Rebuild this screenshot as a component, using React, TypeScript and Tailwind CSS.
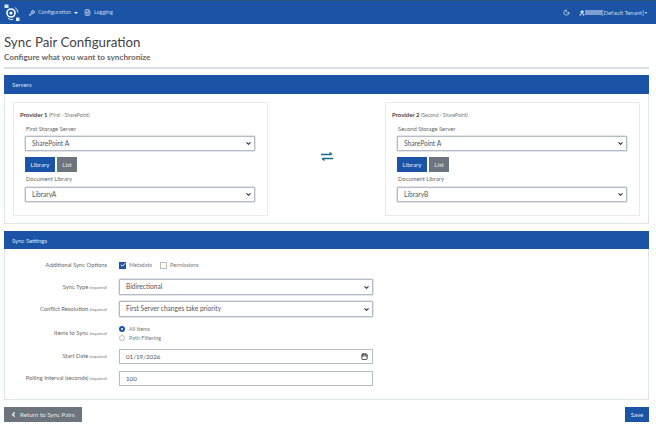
import React from 'react';
import { ChevronLeft, ChevronDown, Moon, User, FileText, Wrench, Calendar, Check } from 'lucide-react';

const Req = () => <span className="text-[4.5px] italic text-[#777]"> (required)</span>;

const FakeSelect = ({ value, h = 'h-[15px]' }: { value: string; h?: string }) => (
  <div className={`flex items-center justify-between border border-[#b4bcc6] rounded-[1px] shadow-[0_0_0_0.5px_#c5ccd4] bg-white pl-[6px] pr-[2px] ${h}`}>
    <span className="text-[6.6px] text-[#555]">{value}</span>
    <ChevronDown size={7} strokeWidth={3.5} className="text-[#333]" />
  </div>
);

const Provider = ({ num, sub, label, lib }: { num: string; sub: string; label: string; lib: string }) => (
  <div className="w-[255px] h-[114px] border border-[#e8ebef] pl-[11px] pr-[12px] pt-[7px]">
    <div className="-ml-[5px] text-[6px] leading-[10px] font-bold text-[#444] whitespace-nowrap">
      Provider {num} <span className="text-[5px] font-normal text-[#777]">({sub})</span>
    </div>
    <div className="mt-[4px] text-[5.8px] leading-[10px] text-[#666] pl-[1px]">{label}</div>
    <div className="mt-[2px]"><FakeSelect value="SharePoint A" /></div>
    <div className="mt-[6px] flex gap-[2px]">
      <div className="w-[30px] h-[15px] bg-[#1b53a6] text-[#e6ecf6] text-[6.2px] flex items-center justify-center">Library</div>
      <div className="w-[20px] h-[15px] bg-[#6c757d] text-[#e6e8ea] text-[6.2px] flex items-center justify-center">List</div>
    </div>
    <div className="mt-[2px] text-[5.8px] leading-[10px] text-[#666] pl-[1px]">Document Library</div>
    <div className="mt-[3px]"><FakeSelect value={lib} /></div>
  </div>
);

const Row = ({ label, children, h }: { label: React.ReactNode; children: React.ReactNode; h: string }) => (
  <div className={`flex items-center ${h}`}>
    <div className="w-[102px] text-right text-[5.8px] text-[#666] whitespace-nowrap">{label}</div>
    <div className="ml-[12px] w-[254px]">{children}</div>
  </div>
);

export default function App() {
  return (
    <div className="w-[656px] h-[431px] bg-white overflow-hidden font-['Lato',sans-serif] text-[#444]">
      <nav className="h-[24px] bg-[#1b53a6] border-t border-[#2f4f80] flex items-center pl-[4px] pr-[9px] text-[#c9d8ee]">
        <svg width="16" height="18" viewBox="0 0 16 18" className="shrink-0">
          <circle cx="7" cy="9" r="4" fill="none" stroke="#fff" strokeWidth="1.6" />
          <circle cx="7" cy="9" r="1.6" fill="#fff" />
          <rect x="0.5" y="0.5" width="4" height="3.5" fill="#dfe8f5" />
          <rect x="12" y="13.5" width="3.5" height="3.5" fill="#dfe8f5" />
          <path d="M4 14.5a7 7 0 0 0 5 1M11 3.5a7 7 0 0 1 3 5" fill="none" stroke="#dfe8f5" strokeWidth="1" />
        </svg>
        <Wrench size={6} strokeWidth={3} className="ml-[9px] text-white" />
        <span className="ml-[3px] text-[5.5px]">Configuration</span>
        <span className="ml-[3px] w-0 h-0 border-x-[2px] border-x-transparent border-t-[2px] border-t-white" />
        <FileText size={7} strokeWidth={2} className="ml-[6px] text-white" />
        <span className="ml-[3px] text-[5.5px]">Logging</span>
        <Moon size={7} strokeWidth={2.5} className="ml-auto text-[#dbe5f3]" />
        <User size={6} strokeWidth={4} className="ml-[9px] text-white" />
        <span className="w-[17px] h-[5px] bg-[#7f9fd0]" />
        <span className="text-[6px]">[Default Tenant]</span>
        <span className="ml-[1px] w-0 h-0 border-x-[1.5px] border-x-transparent border-t-[2px] border-t-white" />
      </nav>

      <main className="pl-[4px] pr-[7px]">
        <h1 className="mt-[10px] text-[13.3px] leading-[16px] font-normal text-[#444]">Sync Pair Configuration</h1>
        <h2 className="mt-[2px] text-[8.2px] leading-[11px] font-bold text-[#666]">Configure what you want to synchronize</h2>
        <hr className="mt-[4px] border-0 h-[2px] bg-[#dcdfe2]" />

        <section className="mt-[6px] border border-t-0 border-[#dfe6ee]">
          <div className="h-[19px] -mx-px bg-[#1b53a6] text-[#dfe8f5] text-[6px] flex items-center pl-[8px]">Servers</div>
          <div className="h-[129px] pl-[8px] pr-[8px] pt-[8px] flex items-start justify-between">
            <Provider num="1" sub="First - SharePoint" label="First Storage Server" lib="LibraryA" />
            <svg width="12" height="9" viewBox="0 0 12 9" className="mt-[50px] shrink-0">
              <path d="M0 2.5h10.5M8.5 0.5l2.5 2M12 6.5H1.5M3.5 8.5l-2.5-2" fill="none" stroke="#186d8c" strokeWidth="1.3" />
            </svg>
            <Provider num="2" sub="Second - SharePoint" label="Second Storage Server" lib="LibraryB" />
          </div>
        </section>

        <section className="mt-[7px] border border-t-0 border-[#dfe6ee]">
          <div className="h-[18px] -mx-px bg-[#1b53a6] text-[#dfe8f5] text-[6px] flex items-center pl-[8px]">Sync Settings</div>
          <div className="h-[150px] pt-[7px] flex flex-col">
            <Row label="Additional Sync Options" h="h-[18px]">
              <div className="flex items-center text-[5.5px] text-[#777]">
                <span className="w-[7px] h-[7px] bg-[#1b53a6] flex items-center justify-center"><Check size={6} strokeWidth={4} className="text-white" /></span>
                <span className="ml-[3px]">Metadata</span>
                <span className="ml-[8px] w-[7px] h-[7px] border border-[#bbb]" />
                <span className="ml-[3px]">Permissions</span>
              </div>
            </Row>
            <div className="mt-[5px]" />
            <Row label={<>Sync Type<Req /></>} h="h-[16px]"><FakeSelect value="Bidirectional" h="h-[16px]" /></Row>
            <div className="mt-[6px]" />
            <Row label={<>Conflict Resolution<Req /></>} h="h-[16px]"><FakeSelect value="First Server changes take priority" h="h-[16px]" /></Row>
            <div className="mt-[5px]" />
            <Row label={<>Items to Sync<Req /></>} h="h-[22px]">
              <div className="flex flex-col gap-[1px] text-[5.5px] text-[#777]">
                <div className="flex items-center leading-[8px]">
                  <span className="w-[6px] h-[6px] rounded-full border-2 border-[#1b53a6]" />
                  <span className="ml-[4px]">All Items</span>
                </div>
                <div className="flex items-center leading-[8px]">
                  <span className="w-[6px] h-[6px] rounded-full border border-[#bbb]" />
                  <span className="ml-[4px]">Path Filtering</span>
                </div>
              </div>
            </Row>
            <div className="mt-[5px]" />
            <Row label={<>Start Date<Req /></>} h="h-[15px]">
              <div className="h-[15px] flex items-center justify-between border border-[#b4bcc6] pl-[6px] pr-[4px] text-[6.2px] text-[#555]">
                01/19/2026
                <Calendar size={7} strokeWidth={3} className="text-[#333]" />
              </div>
            </Row>
            <div className="mt-[7px]" />
            <Row label={<>Polling Interval (seconds)<Req /></>} h="h-[15px]">
              <div className="h-[15px] flex items-center border border-[#b4bcc6] pl-[6px] text-[6.2px] text-[#555]">100</div>
            </Row>
          </div>
        </section>

        <div className="mt-[7px] flex justify-between">
          <div className="w-[78px] h-[15px] bg-[#6c757d] text-[#e6e8ea] text-[6.2px] flex items-center pl-[6px]">
            <ChevronLeft size={7} strokeWidth={4} className="text-white" />
            <span className="ml-[3px]">Return to Sync Pairs</span>
          </div>
          <div className="w-[24px] h-[15px] bg-[#1b53a6] text-[#e6ecf6] text-[6.2px] flex items-center justify-center">Save</div>
        </div>
      </main>
    </div>
  );
}
